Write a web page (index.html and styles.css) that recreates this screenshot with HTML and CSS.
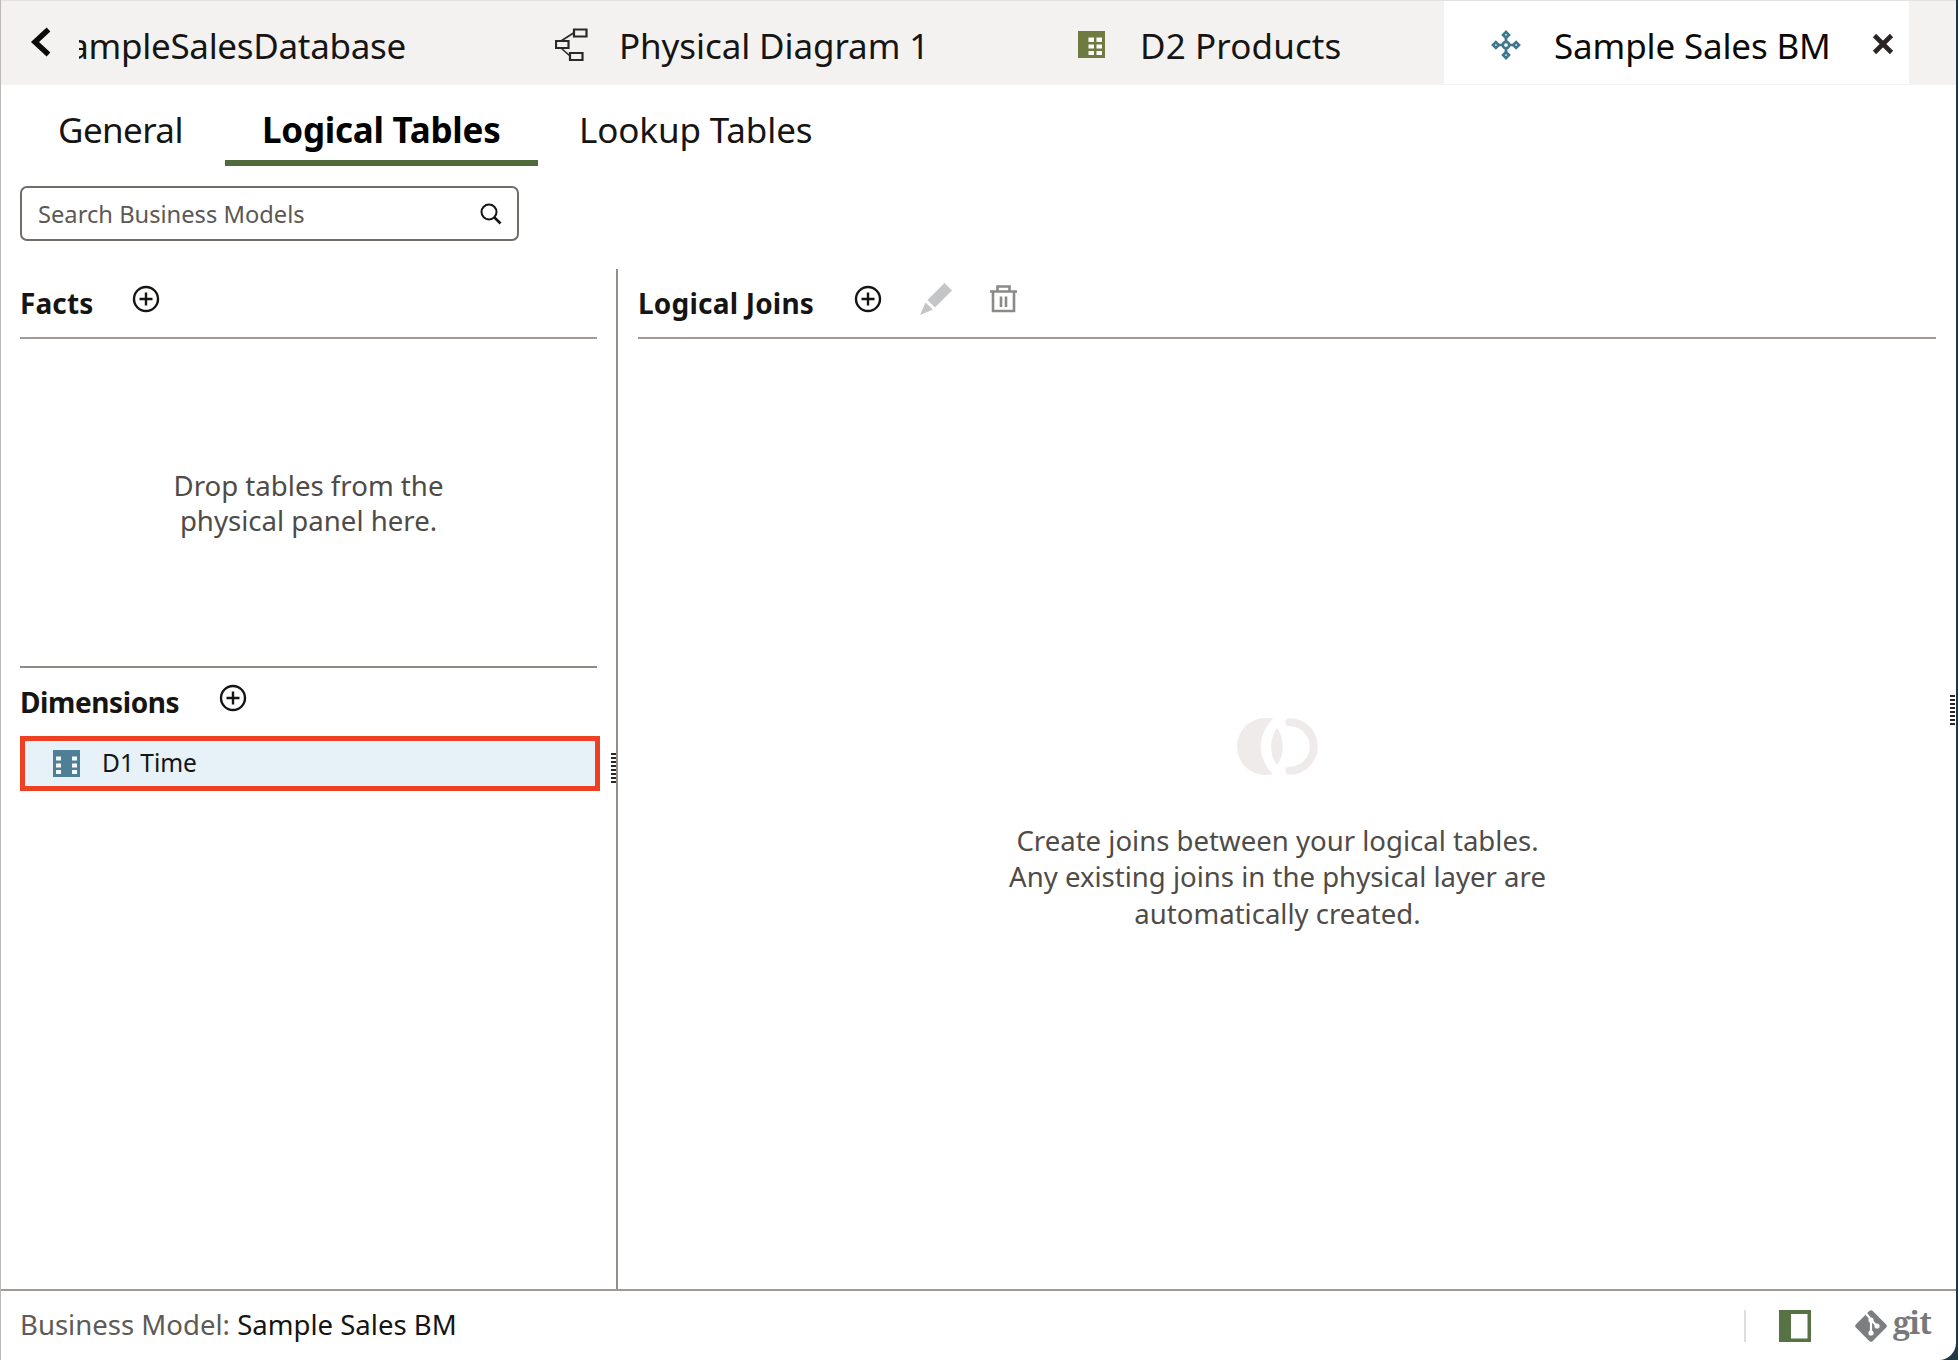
FILE: index.html
```html
<!DOCTYPE html>
<html lang="en">
<head>
<meta charset="utf-8">
<title>Sample Sales BM</title>
<link rel="stylesheet" href="styles.css">
</head>
<body>
<svg class="defs" width="0" height="0">
  <symbol id="plus" viewBox="0 0 28 28">
    <circle cx="14" cy="14" r="12" fill="none" stroke="#161513" stroke-width="2.4"/>
    <path d="M14 7.5v13M7.5 14h13" stroke="#161513" stroke-width="2.4"/>
  </symbol>
</svg>
<div class="app">
  <header class="tabbar">
    <button class="back" aria-label="Back">
      <svg width="22" height="30" viewBox="0 0 22 30"><path d="M18.500 2.500 5 15l13.500 12.500" fill="none" stroke="#0b0a09" stroke-width="5.500"/></svg>
    </button>
    <div class="tab tab-db"><span>SampleSalesDatabase</span></div>
    <div class="tab">
      <span class="tab-icon">
        <svg width="33" height="33" viewBox="0 0 33 33" fill="none" stroke="#2b2927" stroke-width="2.200"><path d="M18.500 5 6 13M6 20l9 8" stroke-width="1.600"/><path d="M19 1.500h12.500v7H19zM1 13h12.500v7H1zM15 25h12.500v7H15z"/></svg>
      </span>
      <span class="t-diagram">Physical Diagram 1</span>
    </div>
    <div class="tab">
      <span class="tab-icon">
        <svg width="27" height="27" viewBox="0 0 27 27"><path fill="#6f7a40" d="M0 0h27v27H0z"/><path fill="#fff" d="M10.500 6.500h5.500v4.500h-5.500zM18.500 6.500h5.500v4.500h-5.500zM10.500 13.500h5.500v4h-5.500zM18.500 13.500h5.500v4h-5.500zM10.500 20h5.500v4h-5.500zM18.500 20h5.500v4h-5.500z"/></svg>
      </span>
      <span class="t-products">D2 Products</span>
    </div>
    <div class="tab active">
      <span class="tab-icon">
        <svg width="30" height="30" viewBox="0 0 30 30" fill="none" stroke="#41768f" stroke-width="2.700"><path d="M15 8v4M15 18v4M8 15h4M18 15h4"/><path d="M15 2 17.900 4.900 15 7.800 12.100 4.900zM15 22.200l2.900 2.900-2.900 2.900-2.900-2.900zM4.900 12.100 7.800 15l-2.900 2.900L2 15zM25.100 12.100l2.900 2.900-2.900 2.900-2.900-2.900z"/><circle cx="15" cy="15" r="3.200"/></svg>
      </span>
      <span class="t-model">Sample Sales BM</span>
      <svg class="close" width="22" height="22" viewBox="0 0 22 22"><path d="M2.500 2.500l17 17M19.500 2.500l-17 17" stroke="#2a2522" stroke-width="4.600"/></svg>
    </div>
  </header>

  <nav class="subtabs">
    <a class="sub-general">General</a>
    <a class="sub-logical">Logical Tables</a>
    <a class="sub-lookup">Lookup Tables</a>
  </nav>

  <div class="search">
    <span>Search Business Models</span>
    <svg width="22" height="22" viewBox="0 0 22 22" fill="none" stroke="#161513" stroke-width="2"><circle cx="9" cy="9" r="7.500"/><path d="M14 14l6.500 6.500" stroke-width="2.600"/></svg>
  </div>

  <main class="panes">
    <section class="left">
      <div class="head"><h2 class="h-facts">Facts</h2><svg class="add"><use href="#plus"/></svg></div>
      <p class="drop">Drop tables from the<br>physical panel here.</p>
      <div class="head dims"><h2 class="h-dims">Dimensions</h2><svg class="add"><use href="#plus"/></svg></div>
      <div class="item">
        <svg width="27" height="27" viewBox="0 0 27 27"><path fill="#4f7f97" d="M0 0h27v27H0z"/><path fill="#f4fafd" d="M3 6.500h5v4H3zM3 13.500h5v4H3zM3 20h5v4H3zM19 6.500h5v4h-5zM19 13.500h5v4h-5zM19 20h5v4h-5z"/></svg>
        <span>D1 Time</span>
      </div>
      <i class="grip grip-left"></i>
    </section>
    <section class="right">
      <div class="head">
        <h2 class="h-joins">Logical Joins</h2>
        <svg class="add"><use href="#plus"/></svg>
        <svg class="edit" width="33" height="33" viewBox="0 0 33 33" fill="#c3c5c7"><path d="M24.500 0 32 7.500 15 24.500 7.500 17zM5.500 19.500l7.500 7L0 32z"/></svg>
        <svg class="trash" width="28" height="28" viewBox="0 0 28 28" fill="none" stroke="#8b8a88" stroke-width="2.600"><path d="M0 6.500h27M7.500 6V1.500h12V6M3 7v19h21V7M11 11.500v10.500M16 11.500v10.500"/></svg>
      </div>
      <div class="empty">
        <svg width="81" height="57" viewBox="0 0 81 57" fill="#efebea"><path d="M36 1A28.500 28.500 0 1 0 36 56A37 37 0 0 1 36 1z"/><path d="M40 10a32 32 0 0 1 0 37a32 32 0 0 1 0-37z"/><path d="M52.500 4.200A24.300 24.300 0 0 1 52.500 52.800" fill="none" stroke="#efebea" stroke-width="8" stroke-linecap="round"/></svg>
        <p>Create joins between your logical tables.<br>Any existing joins in the physical layer are<br>automatically created.</p>
      </div>
    </section>
  </main>

  <footer class="status">
    <span class="label">Business Model: <b>Sample Sales BM</b></span>
    <i class="sep"></i>
    <svg class="panel-toggle" width="32" height="32" viewBox="0 0 32 32"><path fill="#577245" d="M0 0h32v32H0z"/><path fill="#fff" d="M12 4h16.500v24.500H12z"/></svg>
    <svg width="32" height="32" viewBox="0 0 32 32"><path d="M14.500.8q1.500-1.300 3 0L31.200 14.500q1.300 1.500 0 3L17.500 31.200q-1.500 1.300-3 0L.8 17.500q-1.300-1.500 0-3z" fill="#7d7e80"/><path d="M11 3.500l5 6v13M16 10l5.500 5.500" fill="none" stroke="#fff" stroke-width="2.200"/><circle cx="16" cy="10" r="2.600" fill="#fff"/><circle cx="16" cy="23" r="2.600" fill="#fff"/><circle cx="22" cy="16" r="2.600" fill="#fff"/></svg>
    <span class="git">git</span>
  </footer>
  <i class="grip grip-right"></i>
</div>
</body>
</html>
```
FILE: styles.css
```css
* { box-sizing: border-box; }
body {
  margin: 0;
  background: #1d3844;
  font-family: "Noto Sans", sans-serif;
  color: #161513;
}
.defs { position: absolute; }
svg { display: block; flex: none; }
h2, p { margin: 0; }

.app {
  position: relative;
  width: 1956px;
  height: 1360px;
  display: flex;
  flex-direction: column;
  background: #fff;
  border-left: 1px solid #bcb8b6;
  border-bottom-right-radius: 17px;
}

/* document tabs */
.tabbar {
  flex: none;
  display: grid;
  grid-template-columns: 78px 328px 523px 514px 465px 1fr;
  height: 85px;
  background: #f4f2f1;
  border-top: 1px solid #e4e2e0;
  border-bottom: 1px solid #f4f2f1;
  font-size: 35px;
  white-space: nowrap;
}
.back { display: flex; align-items: flex-start; padding: 26px 0 0 29px; border: 0; background: none; }
.tab { display: flex; align-items: center; padding: 6px 0 0 148px; }
.tab-db { justify-content: flex-end; padding: 6px 1px 0 0; overflow: hidden; letter-spacing: -0.3px; }
.tab-icon { flex: none; width: 63px; padding-bottom: 2px; }
.t-diagram { margin-left: 1px; letter-spacing: -0.1px; }
.t-products { letter-spacing: 0.12px; margin-left: -1px; }
.tab.active { background: #fff; padding-left: 47px; color: #0b0a09; }
.t-model { letter-spacing: -0.15px; }
.close { margin: 0 0 4px 41px; }

/* section tabs */
.subtabs { flex: none; display: flex; height: 81px; font-size: 35px; line-height: 62px; }
.subtabs a { padding-top: 14px; }
.sub-general { width: 224px; padding-left: 57px; letter-spacing: -0.6px; }
.subtabs .sub-logical {
  width: 313px;
  padding-left: 37px;
  font-weight: 700;
  letter-spacing: -0.25px;
  color: #000;
  border-bottom: 6px solid #4f6b3c;
}
.sub-lookup { padding-left: 41px; letter-spacing: -0.12px; }

.search {
  flex: none;
  display: flex;
  align-items: center;
  justify-content: space-between;
  width: 499px;
  height: 55px;
  margin: 20px 0 28px 19px;
  padding: 0 15px 0 16px;
  border: 2px solid #716c68;
  border-radius: 7px;
  font-size: 23.700px;
  color: #5c5854;
}

/* panes */
.panes { flex: 1; display: flex; }
.left { position: relative; width: 617px; padding: 0 19px 0 19px; border-right: 2px solid #938e8a; }
.right { flex: 1; padding: 0 20px 0 20px; }
.head {
  display: flex;
  align-items: center;
  height: 70px;
  border-bottom: 2px solid #a09b97;
}
.head.dims { height: 70px; border-bottom: 0; border-top: 2px solid #8f8a86; }
h2 { font-size: 28px; line-height: 68px; font-weight: 700; }
.h-facts { width: 112px; letter-spacing: 0.1px; }
.h-dims { width: 199px; letter-spacing: -0.4px; }
.h-joins { width: 216px; letter-spacing: 0.2px; }
.add { width: 28px; height: 28px; margin-bottom: 9px; }
.edit { margin: 0 0 8px 38px; }
.trash { margin: 0 0 9px 37px; }
.drop {
  height: 327px;
  padding-top: 129px;
  text-align: center;
  font-size: 27.600px;
  line-height: 35px;
  color: #4f4b47;
}
.item {
  display: flex;
  align-items: center;
  gap: 22px;
  width: 580px;
  height: 55px;
  padding: 0 0 1px 28px;
  background: #e6f1f8;
  border: 5px solid #ee4023;
  font-size: 24.500px;
}
.item span { line-height: 42px; }
.empty {
  display: flex;
  flex-direction: column;
  align-items: center;
  gap: 48px;
  padding: 379px 19px 0 0;
  text-align: center;
  font-size: 27.550px;
  line-height: 36.300px;
  color: #4f4b47;
}

/* splitter handles */
.grip {
  position: absolute;
  width: 5px;
  height: 31px;
  background: repeating-linear-gradient(#2b2927 0 2px, #fff 2px 4px);
}
.grip-left { right: 0; top: 484px; }
.grip-right { right: 1px; top: 695px; }

/* status bar */
.status {
  flex: none;
  display: flex;
  align-items: center;
  height: 71px;
  padding-left: 19px;
  border-top: 2px solid #a09a94;
  font-size: 27.550px;
}
.label { flex: 1; padding-bottom: 2px; color: #5e5a56; }
.label b { font-weight: 400; color: #161513; }
.sep { width: 2px; height: 32px; background: #dedddc; }
.panel-toggle { margin: 0 44px 0 33px; }
.git {
  width: 69px;
  padding: 0 0 7px 6px;
  font: 700 31px/40px "Noto Serif", "DejaVu Serif", serif;
  letter-spacing: -1px;
  color: #77787b;
}
```
